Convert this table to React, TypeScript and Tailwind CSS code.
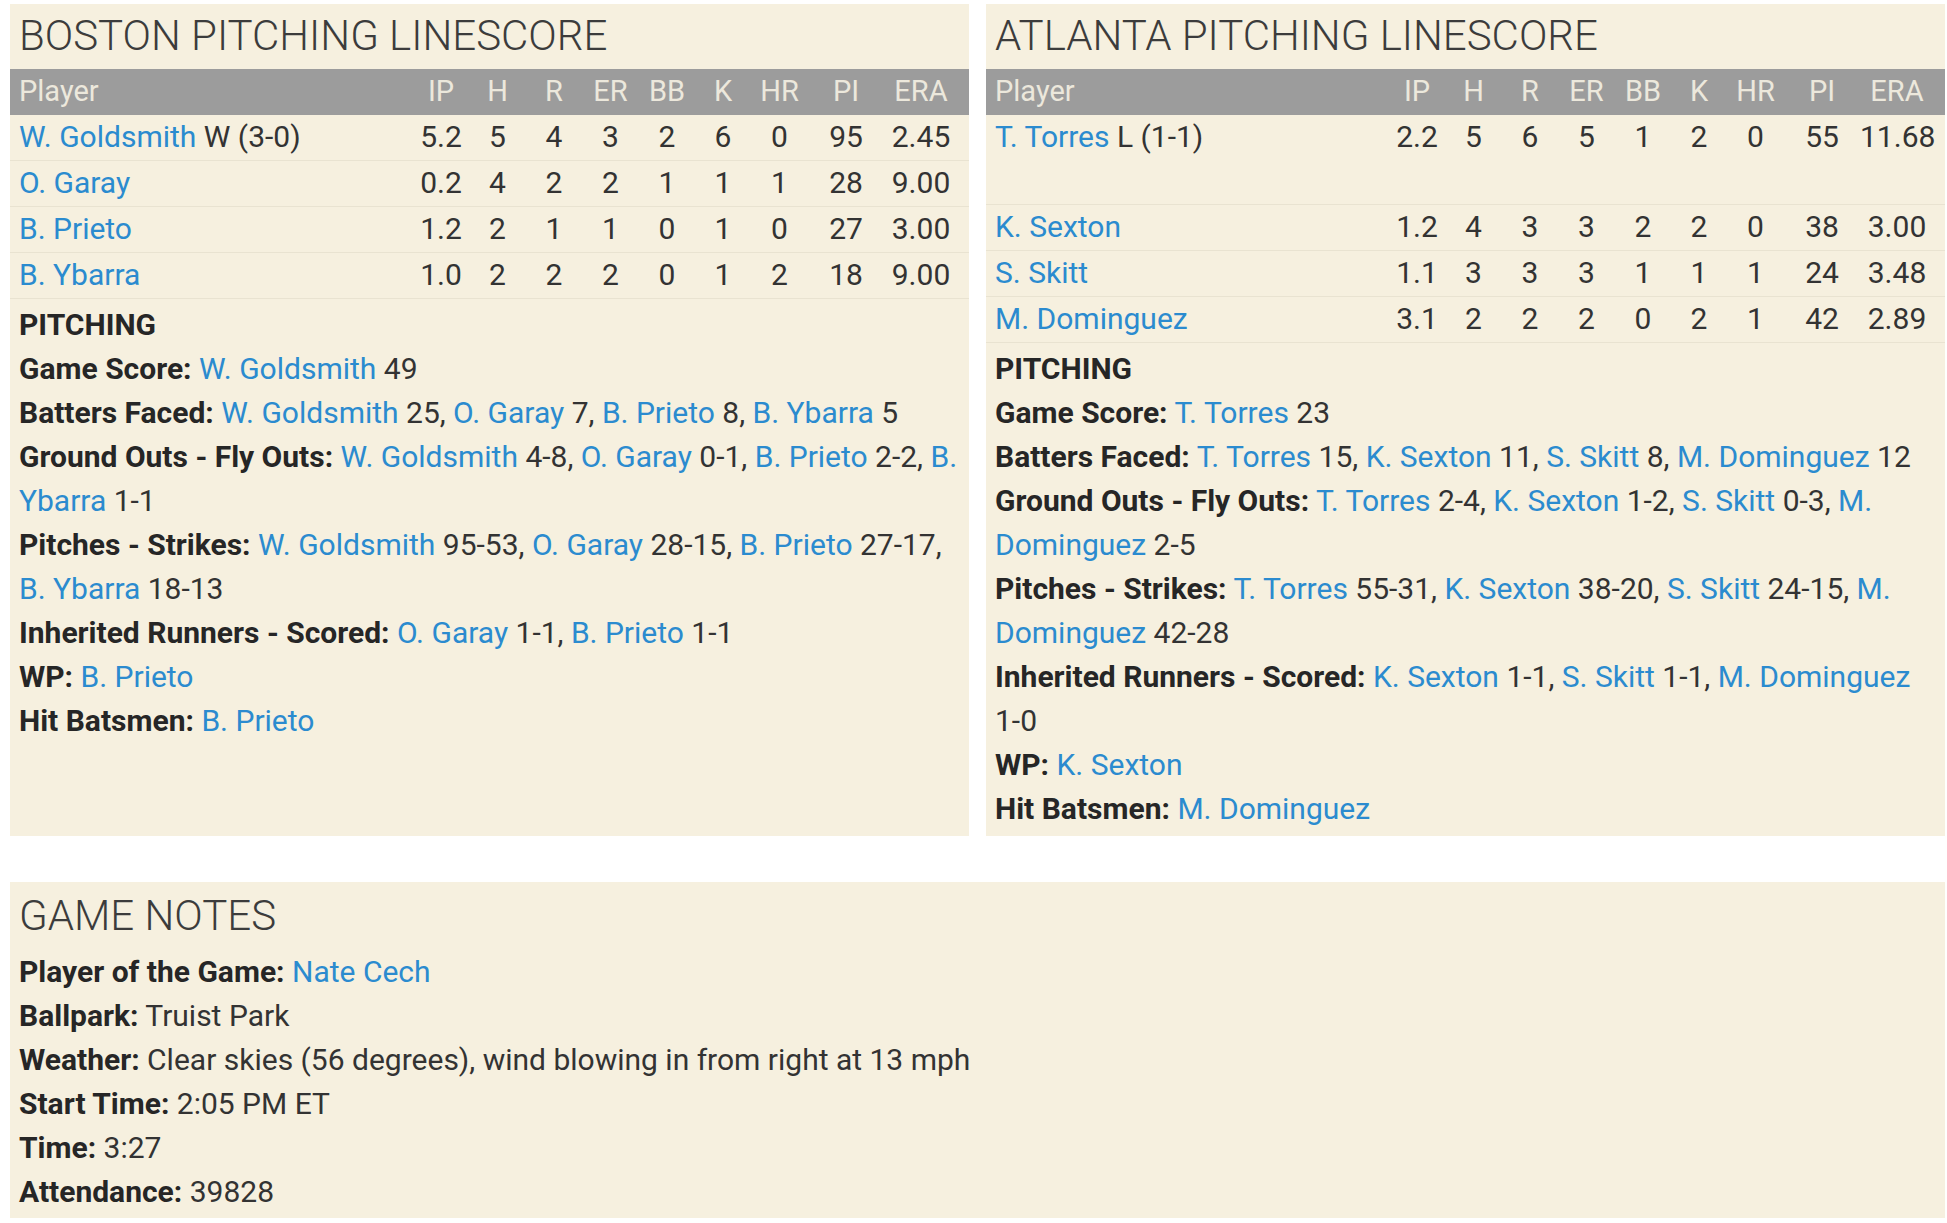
import React from "react";

const L = ({ children }: { children: React.ReactNode }) => (
  <span className="text-[#2b8bcf]">{children}</span>
);
const B = ({ children }: { children: React.ReactNode }) => (
  <span className="font-bold text-[#262626]">{children}</span>
);

type Row = { name: string; dec?: string; s: string[]; tall?: boolean };

const heads = ["IP", "H", "R", "ER", "BB", "K", "HR", "PI", "ERA"];
const gridCls =
  "grid grid-cols-[1fr_56px_57px_56px_57px_56px_56px_57px_76px_74px] pl-[9px] pr-[11px]";

function Table({ rows }: { rows: Row[] }) {
  return (
    <div>
      <div className={`${gridCls} h-[46px] items-center pb-[5px] bg-[#9c9c9c] text-[#ece8dc] text-[29px]`}>
        <div>Player</div>
        {heads.map((h) => (
          <div key={h} className="text-center">
            {h}
          </div>
        ))}
      </div>
      {rows.map((r) => (
        <div
          key={r.name}
          className={`${gridCls} ${r.tall ? "h-[90px] items-start" : "h-[46px] items-center pb-[5px]"} border-b border-[#e9e3d1] text-[#333]`}
        >
          <div className="whitespace-nowrap">
            <L>{r.name}</L>
            {r.dec ? <span> {r.dec}</span> : null}
          </div>
          {r.s.map((v, i) => (
            <div key={i} className="text-center whitespace-nowrap">
              {v}
            </div>
          ))}
        </div>
      ))}
    </div>
  );
}

function Panel({ title, children }: { title: string; children: React.ReactNode }) {
  return (
    <div className="flex-1 bg-[#f6f0df]">
      <div className="h-[65px] flex items-center pb-[2px] pl-[9px] text-[42px] font-light text-[#3c3c3c]">
        {title}
      </div>
      {children}
    </div>
  );
}

const bostonRows: Row[] = [
  { name: "W. Goldsmith", dec: "W (3-0)", s: ["5.2", "5", "4", "3", "2", "6", "0", "95", "2.45"] },
  { name: "O. Garay", s: ["0.2", "4", "2", "2", "1", "1", "1", "28", "9.00"] },
  { name: "B. Prieto", s: ["1.2", "2", "1", "1", "0", "1", "0", "27", "3.00"] },
  { name: "B. Ybarra", s: ["1.0", "2", "2", "2", "0", "1", "2", "18", "9.00"] },
];

const atlRows: Row[] = [
  { name: "T. Torres", dec: "L (1-1)", s: ["2.2", "5", "6", "5", "1", "2", "0", "55", "11.68"], tall: true },
  { name: "K. Sexton", s: ["1.2", "4", "3", "3", "2", "2", "0", "38", "3.00"] },
  { name: "S. Skitt", s: ["1.1", "3", "3", "3", "1", "1", "1", "24", "3.48"] },
  { name: "M. Dominguez", s: ["3.1", "2", "2", "2", "0", "2", "1", "42", "2.89"] },
];

export default function App() {
  return (
    <div
      className="bg-white min-h-[1223px] pt-[4px] pl-[10px] pr-[2px] text-[30px] leading-[44px] text-[#333]"
      style={{ fontFamily: "Roboto, 'Noto Sans', sans-serif" }}
    >
      <div className="flex gap-[17px]">
        <Panel title="BOSTON PITCHING LINESCORE">
          <Table rows={bostonRows} />
          <div className="px-[9px] pt-[4px] pb-[5px] whitespace-nowrap">
            <div><B>PITCHING</B></div>
            <div>
              <B>Game Score:</B> <L>W. Goldsmith</L> 49
            </div>
            <div>
              <B>Batters Faced:</B> <L>W. Goldsmith</L> 25, <L>O. Garay</L> 7, <L>B. Prieto</L> 8,{" "}
              <L>B. Ybarra</L> 5
            </div>
            <div>
              <B>Ground Outs - Fly Outs:</B> <L>W. Goldsmith</L> 4-8, <L>O. Garay</L> 0-1,{" "}
              <L>B. Prieto</L> 2-2, <L>B.</L>
              <br />
              <L>Ybarra</L> 1-1
            </div>
            <div>
              <B>Pitches - Strikes:</B> <L>W. Goldsmith</L> 95-53, <L>O. Garay</L> 28-15,{" "}
              <L>B. Prieto</L> 27-17,
              <br />
              <L>B. Ybarra</L> 18-13
            </div>
            <div>
              <B>Inherited Runners - Scored:</B> <L>O. Garay</L> 1-1, <L>B. Prieto</L> 1-1
            </div>
            <div>
              <B>WP:</B> <L>B. Prieto</L>
            </div>
            <div>
              <B>Hit Batsmen:</B> <L>B. Prieto</L>
            </div>
          </div>
        </Panel>
        <Panel title="ATLANTA PITCHING LINESCORE">
          <Table rows={atlRows} />
          <div className="px-[9px] pt-[4px] pb-[5px] whitespace-nowrap">
            <div><B>PITCHING</B></div>
            <div>
              <B>Game Score:</B> <L>T. Torres</L> 23
            </div>
            <div>
              <B>Batters Faced:</B> <L>T. Torres</L> 15, <L>K. Sexton</L> 11, <L>S. Skitt</L> 8,{" "}
              <L>M. Dominguez</L> 12
            </div>
            <div>
              <B>Ground Outs - Fly Outs:</B> <L>T. Torres</L> 2-4, <L>K. Sexton</L> 1-2,{" "}
              <L>S. Skitt</L> 0-3, <L>M.</L>
              <br />
              <L>Dominguez</L> 2-5
            </div>
            <div>
              <B>Pitches - Strikes:</B> <L>T. Torres</L> 55-31, <L>K. Sexton</L> 38-20,{" "}
              <L>S. Skitt</L> 24-15, <L>M.</L>
              <br />
              <L>Dominguez</L> 42-28
            </div>
            <div>
              <B>Inherited Runners - Scored:</B> <L>K. Sexton</L> 1-1, <L>S. Skitt</L> 1-1,{" "}
              <L>M. Dominguez</L>
              <br />
              1-0
            </div>
            <div>
              <B>WP:</B> <L>K. Sexton</L>
            </div>
            <div>
              <B>Hit Batsmen:</B> <L>M. Dominguez</L>
            </div>
          </div>
        </Panel>
      </div>
      <div className="mt-[46px] bg-[#f6f0df] pb-[4px]">
        <div className="h-[68px] flex items-center pl-[9px] text-[42px] font-light text-[#3c3c3c]">
          GAME NOTES
        </div>
        <div className="px-[9px]">
          <div>
            <B>Player of the Game:</B> <L>Nate Cech</L>
          </div>
          <div>
            <B>Ballpark:</B> Truist Park
          </div>
          <div>
            <B>Weather:</B> Clear skies (56 degrees), wind blowing in from right at 13 mph
          </div>
          <div>
            <B>Start Time:</B> 2:05 PM ET
          </div>
          <div>
            <B>Time:</B> 3:27
          </div>
          <div>
            <B>Attendance:</B> 39828
          </div>
        </div>
      </div>
    </div>
  );
}
